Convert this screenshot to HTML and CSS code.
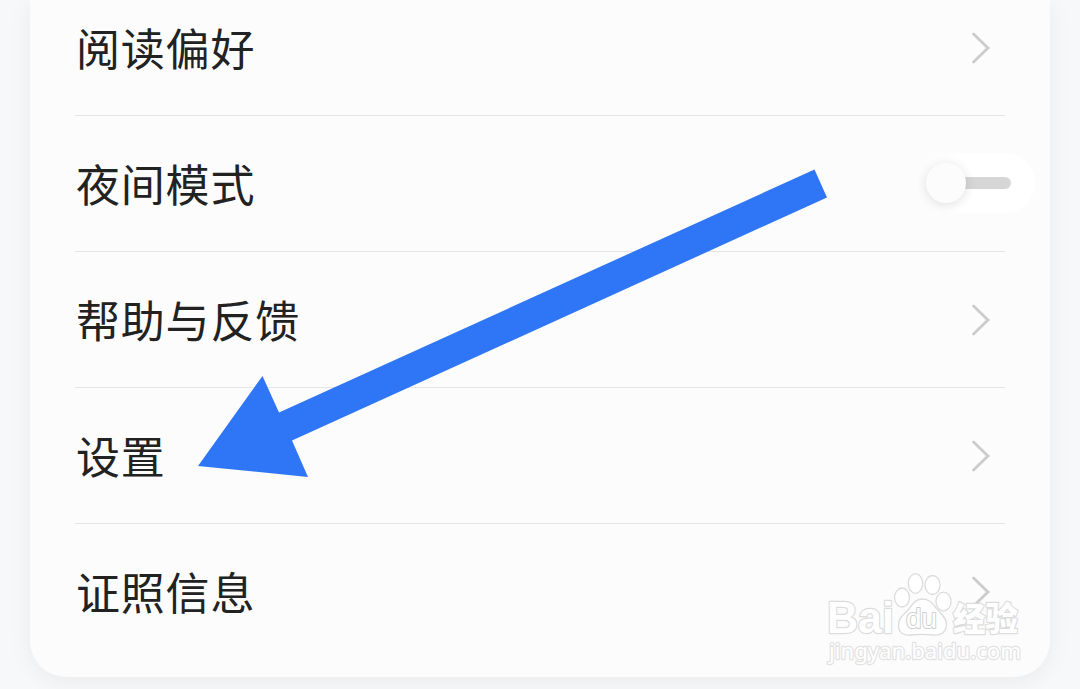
FILE: index.html
```html
<!DOCTYPE html>
<html lang="zh-CN">
<head>
  <meta charset="UTF-8">
  <meta name="viewport" content="width=device-width, initial-scale=1.0">
  <title>设置</title>
  <link rel="stylesheet" href="styles.css">
</head>
<body>
  <main class="page">
    <ul class="menu">
      <li class="menu-item">
        <span class="label">阅读偏好</span>
        <svg class="chevron" viewBox="0 0 20 32"><path d="M2.5 2 L17 16 L2.5 30"/></svg>
      </li>
      <li class="menu-item">
        <span class="label">夜间模式</span>
        <span class="switch"><span class="knob"></span><span class="track"></span></span>
      </li>
      <li class="menu-item">
        <span class="label">帮助与反馈</span>
        <svg class="chevron" viewBox="0 0 20 32"><path d="M2.5 2 L17 16 L2.5 30"/></svg>
      </li>
      <li class="menu-item">
        <span class="label">设置</span>
        <svg class="chevron" viewBox="0 0 20 32"><path d="M2.5 2 L17 16 L2.5 30"/></svg>
      </li>
      <li class="menu-item">
        <span class="label">证照信息</span>
        <svg class="chevron" viewBox="0 0 20 32"><path d="M2.5 2 L17 16 L2.5 30"/></svg>
      </li>
    </ul>
  </main>

  <svg class="arrow" viewBox="0 0 640 320">
    <polygon points="8,306 72.500,216 89,252.500 624.500,9.500 637,37.500 102,280.500 118,317"/>
  </svg>

  <svg class="watermark" viewBox="0 0 210 105">
    <g class="logo">
      <text class="latin" x="7" y="63" textLength="67" lengthAdjust="spacingAndGlyphs">Bai</text>
      <ellipse cx="82" cy="27.500" rx="7.500" ry="9.500"/>
      <ellipse cx="95.500" cy="13.500" rx="7.200" ry="9.800"/>
      <ellipse cx="112.500" cy="15" rx="7.500" ry="9.500"/>
      <ellipse cx="123.500" cy="31.500" rx="7.500" ry="9.300"/>
      <path d="M102 29 C95 29 92 35 89 39 C85 44 78 47 78.500 56 C79 63 84 66 91 65 C99 64 105 64 113 65 C121 66 126 62 126.500 55 C127 48 121 44 117 39 C113 34 110 29 102 29 Z"/>
      <text class="du" x="86" y="58" textLength="31" lengthAdjust="spacingAndGlyphs">du</text>
      <text class="cjk" x="133" y="61" textLength="65" lengthAdjust="spacingAndGlyphs">经验</text>
    </g>
    <text class="url" x="9" y="89" textLength="192" lengthAdjust="spacingAndGlyphs">jingyan.baidu.com</text>
  </svg>
</body>
</html>
```
FILE: styles.css
```css
* {
  margin: 0;
  padding: 0;
  box-sizing: border-box;
}

body {
  position: relative;
  width: 1080px;
  height: 689px;
  overflow: hidden;
  background: #f6f8fa;
  font-family: "Noto Sans CJK SC", sans-serif;
  color: #222;
}

.page {
  height: 689px;
  padding: 0 30px 12px;
}

.menu {
  display: flex;
  flex-direction: column;
  justify-content: flex-end;
  height: 677px;
  padding: 0 45px 17px;
  list-style: none;
  background: #fcfcfc;
  border-radius: 0 0 36px 36px;
  box-shadow: 0 4px 24px rgba(0, 0, 0, 0.06);
}

.menu-item {
  display: flex;
  flex-shrink: 0;
  align-items: center;
  justify-content: space-between;
  height: 136px;
  padding-right: 14px;
  border-bottom: 1px solid #e5e5e5;
}

.menu-item:last-child {
  border-bottom: none;
}

.label {
  padding: 0 0 2px 1px;
  font-size: 44px;
  line-height: 64px;
  letter-spacing: 0.8px;
}

.chevron {
  width: 20px;
  height: 32px;
  fill: none;
  stroke: #ccc;
  stroke-width: 2.8;
  stroke-linecap: round;
}

.switch {
  display: flex;
  align-items: center;
  width: 120px;
  height: 60px;
  margin-right: -44px;
  margin-bottom: 1px;
  padding-left: 11px;
  background: linear-gradient(to right, #fcfcfc, #fff 40%);
  border-radius: 30px;
}

.knob {
  z-index: 1;
  width: 40px;
  height: 40px;
  background: #fcfcfc;
  border-radius: 50%;
  box-shadow: 0 2px 12px rgba(0, 0, 0, 0.12);
}

.track {
  width: 55px;
  height: 12px;
  margin-left: -10px;
  background: #d6d6d6;
  border-radius: 6px;
}

.arrow {
  position: absolute;
  left: 190px;
  top: 160px;
  width: 640px;
  height: 320px;
  fill: #2f76f6;
}

.watermark {
  position: absolute;
  left: 820px;
  top: 570px;
  width: 210px;
  height: 105px;
  fill: #fff;
  stroke: #dcdcdc;
  stroke-width: 1.3;
  stroke-linejoin: round;
}

.watermark text {
  paint-order: stroke;
  stroke-width: 2.4;
}

.latin {
  font: bold 44px "Liberation Sans", sans-serif;
}

.watermark .du {
  font: 27px "Liberation Sans", sans-serif;
  stroke-width: 2;
  stroke: #d0d0d0;
}

.cjk {
  font: 900 33px "Noto Sans CJK SC", sans-serif;
}

.watermark .url {
  font: 22px "Noto Sans", sans-serif;
  stroke: #e2e2e2;
}
```
